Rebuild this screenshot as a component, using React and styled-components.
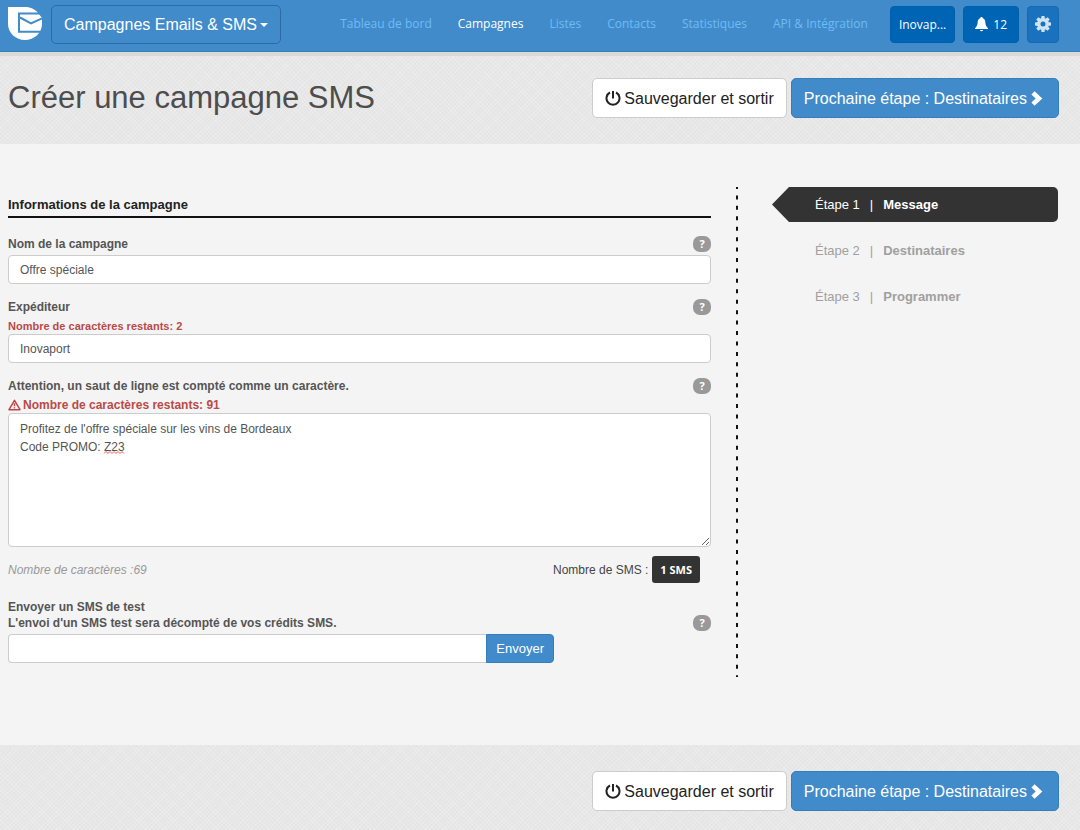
import React from 'react'
import styled, { createGlobalStyle, css } from 'styled-components';

const GlobalStyle = createGlobalStyle`
  * {
    box-sizing: border-box;
  }

  body {
    margin: 0;
    background: #f4f4f4;
    color: #444;
    font-family: "Liberation Sans", Arial, sans-serif;
    font-size: 12px;
    line-height: 18px;
  }

  button, input, textarea {
    font-family: inherit;
  }
`;

const weave = css`
  background-color: #e5e5e5;
  background-image:
    repeating-linear-gradient(45deg, rgba(255, 255, 255, 0.16) 0 1px, transparent 1px 3px),
    repeating-linear-gradient(-45deg, rgba(255, 255, 255, 0.16) 0 1px, transparent 1px 3px);
`;

const TopBar = styled.header`
  display: flex;
  align-items: center;
  height: 52px;
  padding: 0 21px 3px 8px;
  background: #428bca;
  border-bottom: 1px solid #3a7fbb;
`;

const Logo = styled.a`
  display: flex;
  margin-right: 9px;
`;

const ProductButton = styled.button`
  display: flex;
  align-items: center;
  gap: 3px;
  height: 39px;
  padding: 2px 12px 0;
  border: 1px solid #2d6ca2;
  border-radius: 5px;
  background: transparent;
  color: #fff;
  font-size: 16px;
  white-space: nowrap;
`;

const Caret = styled.span`
  border-top: 4px solid #fff;
  border-left: 4px solid transparent;
  border-right: 4px solid transparent;
`;

const Nav = styled.nav`
  display: flex;
  gap: 26px;
  margin-left: auto;
  margin-right: 22px;
  font-family: "Open Sans", sans-serif;
  font-size: 12px;
`;

const NavLink = styled.a`
  color: ${({ $active }) => ($active ? '#fff' : '#6cbcf8')};
  text-decoration: none;
  white-space: nowrap;
`;

const Tools = styled.div`
  display: flex;
  gap: 8px;
`;

const ToolButton = styled.button`
  display: flex;
  align-items: center;
  justify-content: center;
  gap: 5px;
  height: 37px;
  padding: 0 ${({ $pad }) => $pad || 8}px;
  border: 1px solid ${({ $soft }) => ($soft ? '#1768b0' : '#005fae')};
  border-radius: 4px;
  background: ${({ $soft }) => ($soft ? '#1a72bf' : '#0064b5')};
  color: #fff;
  font-family: "Open Sans", sans-serif;
  font-size: 12px;
`;

const Band = styled.div`
  ${weave}
  display: flex;
  align-items: center;
  justify-content: space-between;
  padding: ${({ $top }) => ($top ? 22 : 26)}px 21px 26px 8px;
  border-top: ${({ $top }) => ($top ? '4px solid #d9d9d9' : '0')};
`;

const Title = styled.h1`
  margin: 0;
  color: #4d4d4d;
  font-size: 31px;
  font-weight: 400;
  line-height: 40px;
`;

const Actions = styled.div`
  display: flex;
  gap: 4px;
  margin-left: auto;
`;

const BigButton = styled.button`
  display: flex;
  align-items: center;
  gap: 3px;
  height: 40px;
  padding: 1px 12px 0;
  border: 1px solid ${({ $primary }) => ($primary ? '#357ebd' : '#ccc')};
  border-radius: 5px;
  background: ${({ $primary }) => ($primary ? '#428bca' : '#fff')};
  color: ${({ $primary }) => ($primary ? '#fff' : '#222')};
  font-size: 16px;
  white-space: nowrap;
`;

const Main = styled.main`
  display: grid;
  grid-template-columns: minmax(0, 1fr) 2px 295px;
  column-gap: 25px;
  padding: 43px 22px 68px 8px;
`;

const Form = styled.form`
  padding-bottom: 14px;
`;

const SectionTitle = styled.h2`
  margin: 0 0 17px;
  padding: 8px 0 1px;
  border-bottom: 2px solid #111;
  color: #222;
  font-size: 13px;
  font-weight: 700;
  line-height: 20px;
`;

const Field = styled.div`
  margin-bottom: 14px;
`;

const LabelRow = styled.div`
  display: flex;
  align-items: flex-end;
  justify-content: space-between;
  padding-top: 1px;
  margin-bottom: 3px;
`;

const Label = styled.label`
  color: #555;
  font-size: 12px;
  font-weight: 700;
  line-height: 16px;
`;

const Help = styled.button`
  width: 18px;
  height: 16px;
  padding: 0;
  border: 0;
  border-radius: 7px;
  background: #999;
  color: #fff;
  font-family: "Open Sans", sans-serif;
  font-size: 11px;
  font-weight: 700;
  line-height: 16px;
`;

const Remaining = styled.p`
  display: flex;
  align-items: center;
  gap: 2px;
  margin: 0;
  color: #b94a48;
  font-size: ${({ $small }) => ($small ? 11 : 12)}px;
  font-weight: 700;
  line-height: 16px;
`;

const inputBox = css`
  display: block;
  width: 100%;
  border: 1px solid #ccc;
  border-radius: 4px;
  background: #fff;
  color: #555;
  font-size: 12px;
  outline: 0;
`;

const TextInput = styled.input`
  ${inputBox}
  height: 29px;
  padding: 0 11px;
`;

const MessageWrap = styled.div`
  position: relative;
`;

const TextArea = styled.textarea`
  ${inputBox}
  height: 134px;
  padding: 6px 11px;
  line-height: 18px;
  resize: vertical;
`;

const SpellMark = styled.svg`
  position: absolute;
  top: 38px;
  left: 96px;
`;

const CountRow = styled.div`
  display: flex;
  align-items: center;
  justify-content: space-between;
  margin: 9px 0 15px;
  padding-right: 11px;
`;

const CharCount = styled.em`
  color: #999;
`;

const SmsCount = styled.span`
  display: flex;
  align-items: center;
  gap: 4px;
`;

const SmsBadge = styled.strong`
  padding: 0 8px;
  border-radius: 3px;
  background: #333;
  color: #fff;
  font-family: "Open Sans", sans-serif;
  font-size: 11px;
  line-height: 27px;
`;

const SendGroup = styled.div`
  display: flex;
  max-width: 546px;

  ${TextInput} {
    flex: 1;
    border-right: 0;
    border-radius: 4px 0 0 4px;
  }
`;

const SendButton = styled.button`
  height: 29px;
  padding: 0 9px;
  border: 1px solid #357ebd;
  border-radius: 0 4px 4px 0;
  background: #428bca;
  color: #fff;
  font-size: 13px;
`;

const Divider = styled.svg`
  width: 2px;
  height: 100%;
`;

const Steps = styled.ol`
  display: flex;
  flex-direction: column;
  gap: 11px;
  margin: 0 0 0 9px;
  padding: 0;
  list-style: none;
`;

const Step = styled.li`
  display: flex;
  gap: 10px;
  padding-left: 43px;
  border-radius: 0 5px 5px 0;
  color: #a0a0a0;
  font-size: 13px;
  line-height: 35px;

  ${({ $active }) => $active && css`
    background: #333;
    color: #fff;
    clip-path: polygon(0 50%, 17px 0, 100% 0, 100% 100%, 17px 100%);
  `}
`;

const LogoIcon = () => (
  <svg width="34" height="34" viewBox="0 0 34 34" aria-hidden="true">
    <path d="M0 0H17C23 0 27.500 2.500 30.500 6.500L34 11V17C34 26 26 33 17 33S0 26 0 17z" fill="#fff" />
    <path d="M34 6.500H11V24.800H32" fill="none" stroke="#428bca" strokeWidth="2" />
    <path d="M12 10.500L23 16.500L34 11.500" fill="none" stroke="#428bca" strokeWidth="2" />
    <path d="M30 0H34V6H30z" fill="#428bca" />
  </svg>
);

const PowerIcon = () => (
  <svg width="16" height="16" viewBox="0 0 16 16" fill="none" stroke="#222" strokeWidth="2" aria-hidden="true">
    <path d="M5 1.500a6.500 6.500 0 1 0 6 0" />
    <path d="M8 0v7.500" />
  </svg>
);

const ChevronIcon = () => (
  <svg width="16" height="16" viewBox="0 0 16 16" fill="none" stroke="#fff" strokeWidth="4.600" aria-hidden="true">
    <path d="M3 1.900L9 7.500l-6 5.600" />
  </svg>
);

const BellIcon = () => (
  <svg width="13" height="15" viewBox="0 0 13 15" fill="#fff" aria-hidden="true">
    <path d="M6.500 0c.8 0 1.200.5 1.200 1.200C9.600 1.800 10.200 3.300 10.300 5c.1 2.800.9 4.800 2.700 6.200v.8H0v-.8C1.800 9.800 2.600 7.800 2.700 5c.1-1.700.7-3.200 2.600-3.800C5.300.5 5.700 0 6.500 0z" />
    <path d="M5 13h3a1.500 1.300 0 0 1-3 0z" />
  </svg>
);

const GearIcon = () => (
  <svg width="16" height="16" viewBox="-8 -8 16 16" aria-hidden="true">
    <circle r="4.200" fill="none" stroke="#cfe3f5" strokeWidth="3.400" />
    {[0, 45, 90, 135, 180, 225, 270, 315].map((angle) => (
      <path key={angle} d="M-1.900 -5L-1.500 -8H1.500L1.900 -5z" fill="#cfe3f5" transform={`rotate(${angle})`} />
    ))}
  </svg>
);

const WarningIcon = () => (
  <svg width="13" height="12" viewBox="0 0 13 12" fill="none" stroke="#b94a48" strokeWidth="1.500" aria-hidden="true">
    <path d="M6.500 1.300L12 10.700H1z" strokeLinejoin="round" />
    <path d="M6.500 4.200v3M6.500 8.200v1.400" />
  </svg>
);

const navItems = ['Tableau de bord', 'Campagnes', 'Listes', 'Contacts', 'Statistiques', 'API & Intégration'];

const steps = ['Message', 'Destinataires', 'Programmer'];

const StepActions = () => (
  <Actions>
    <BigButton type="button">
      <PowerIcon />
      Sauvegarder et sortir
    </BigButton>
    <BigButton type="button" $primary>
      Prochaine étape : Destinataires
      <ChevronIcon />
    </BigButton>
  </Actions>
);

const App = () => {
  return (
    <>
      <GlobalStyle />
      <TopBar>
        <Logo href="#" aria-label="Accueil"><LogoIcon /></Logo>
        <ProductButton type="button">
          Campagnes Emails &amp; SMS
          <Caret />
        </ProductButton>
        <Nav>
          {navItems.map((item) => (
            <NavLink key={item} href="#" $active={item === 'Campagnes'}>{item}</NavLink>
          ))}
        </Nav>
        <Tools>
          <ToolButton type="button">Inovap...</ToolButton>
          <ToolButton type="button" $pad={11}><BellIcon />12</ToolButton>
          <ToolButton type="button" $pad={7} $soft aria-label="Paramètres"><GearIcon /></ToolButton>
        </Tools>
      </TopBar>

      <Band $top>
        <Title>Créer une campagne SMS</Title>
        <StepActions />
      </Band>

      <Main>
        <Form>
          <SectionTitle>Informations de la campagne</SectionTitle>

          <Field>
            <LabelRow>
              <Label htmlFor="name">Nom de la campagne</Label>
              <Help type="button">?</Help>
            </LabelRow>
            <TextInput id="name" type="text" defaultValue="Offre spéciale" />
          </Field>

          <Field>
            <LabelRow>
              <Label htmlFor="sender">Expéditeur</Label>
              <Help type="button">?</Help>
            </LabelRow>
            <Remaining $small>Nombre de caractères restants: 2</Remaining>
            <TextInput id="sender" type="text" defaultValue="Inovaport" />
          </Field>

          <LabelRow>
            <Label htmlFor="message">Attention, un saut de ligne est compté comme un caractère.</Label>
            <Help type="button">?</Help>
          </LabelRow>
          <Remaining><WarningIcon />Nombre de caractères restants: 91</Remaining>
          <MessageWrap>
            <TextArea
              id="message"
              spellCheck={false}
              defaultValue={"Profitez de l'offre spéciale sur les vins de Bordeaux\nCode PROMO: Z23"}
            />
            <SpellMark width="21" height="3" viewBox="0 0 21 3" aria-hidden="true">
              <path d="M0 2.500L2 .5l2 2 2-2 2 2 2-2 2 2 2-2 2 2 2-2 2 2" fill="none" stroke="#e0604c" />
            </SpellMark>
          </MessageWrap>

          <CountRow>
            <CharCount>Nombre de caractères :69</CharCount>
            <SmsCount>
              Nombre de SMS :
              <SmsBadge>1 SMS</SmsBadge>
            </SmsCount>
          </CountRow>

          <LabelRow>
            <Label htmlFor="test">
              Envoyer un SMS de test<br />
              L'envoi d'un SMS test sera décompté de vos crédits SMS.
            </Label>
            <Help type="button">?</Help>
          </LabelRow>
          <SendGroup>
            <TextInput id="test" type="text" />
            <SendButton type="button">Envoyer</SendButton>
          </SendGroup>
        </Form>

        <Divider aria-hidden="true">
          <line x1="1" y1="0" x2="1" y2="100%" stroke="#111" strokeWidth="2" strokeDasharray="4 6.430" strokeDashoffset="2" />
        </Divider>

        <Steps>
          {steps.map((step, index) => (
            <Step key={step} $active={index === 0}>
              <span>Étape {index + 1}</span>
              <span>|</span>
              <strong>{step}</strong>
            </Step>
          ))}
        </Steps>
      </Main>

      <Band>
        <StepActions />
      </Band>
    </>
  )
}

export default App;
